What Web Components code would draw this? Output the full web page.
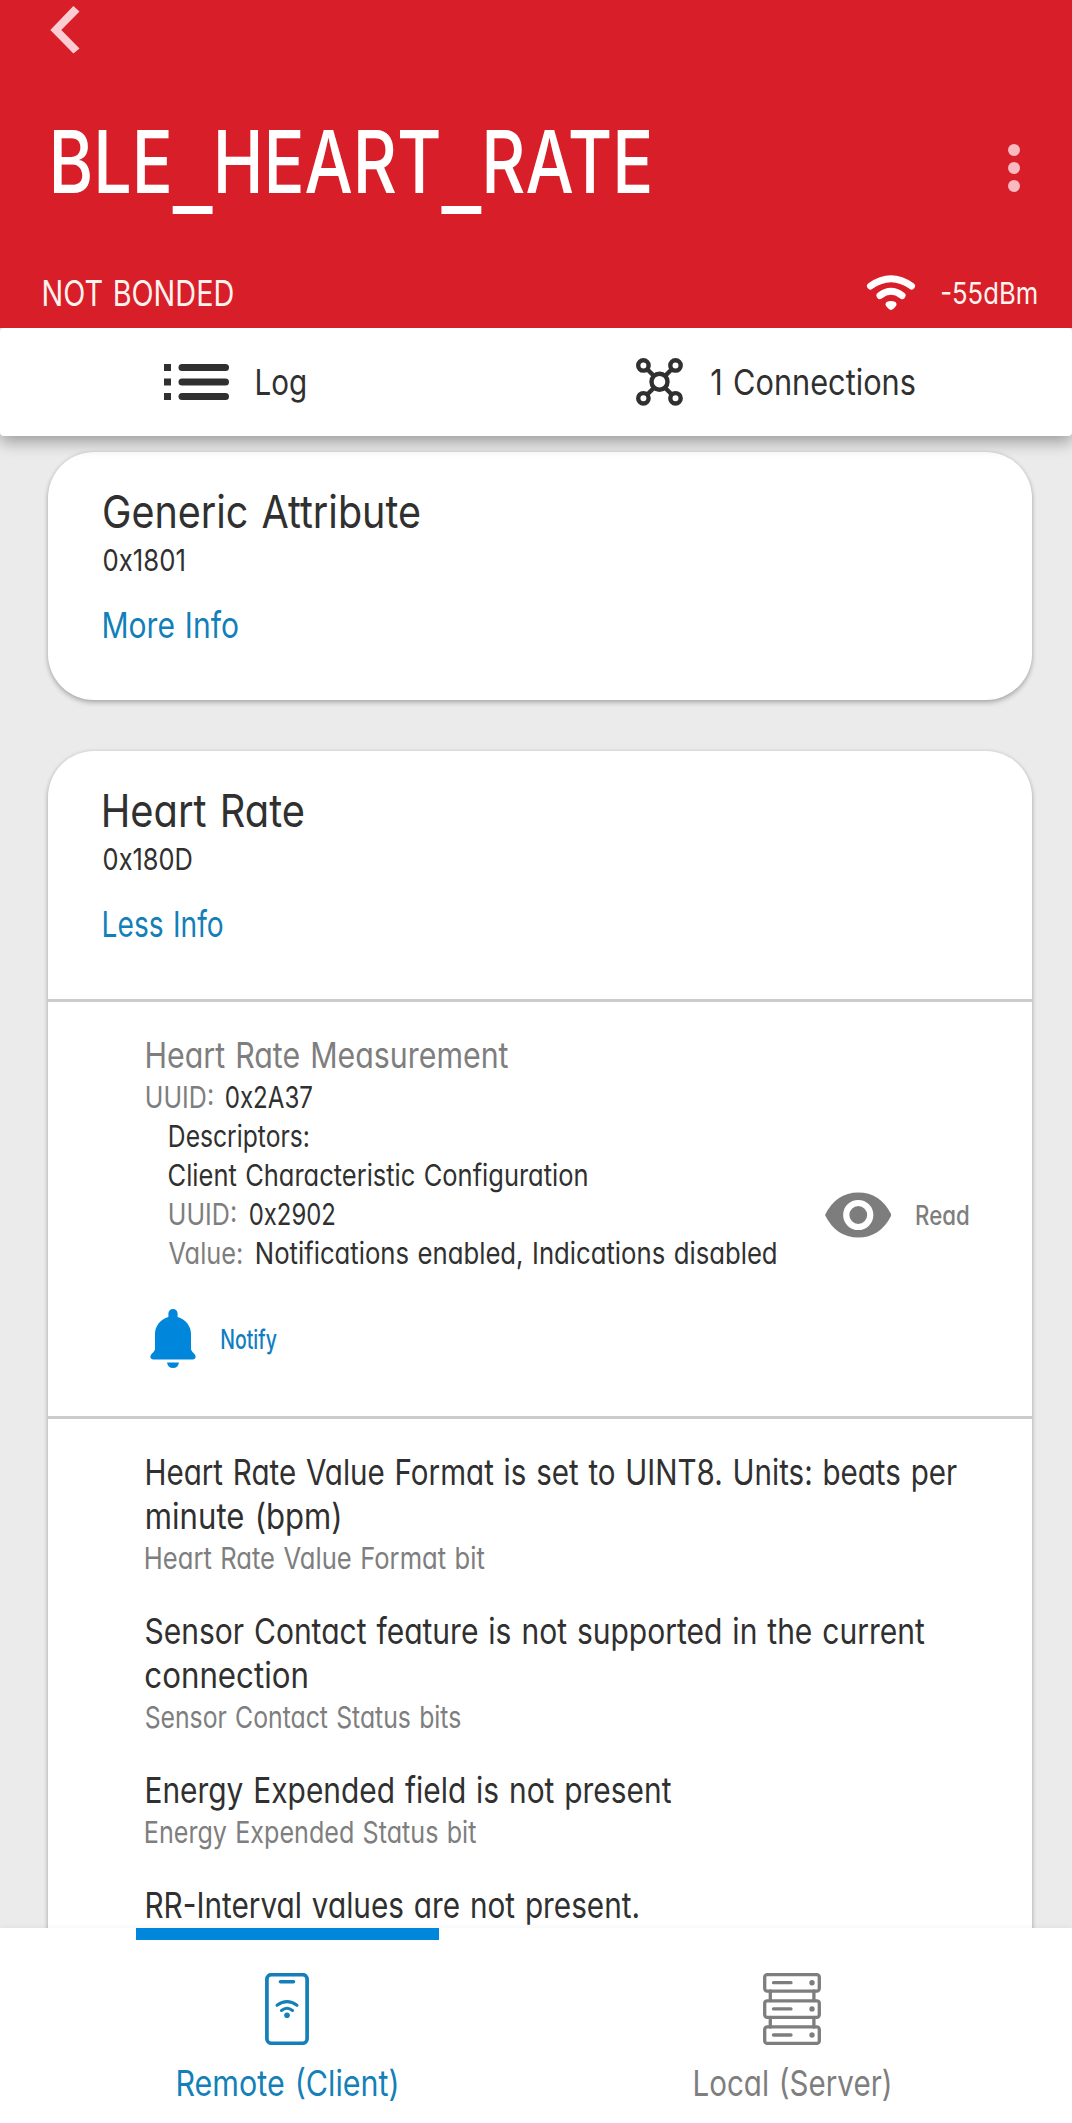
<!DOCTYPE html>
<html lang="en">
<head>
<meta charset="utf-8">
<title>BLE_HEART_RATE</title>
<style>
html,body{margin:0;padding:0}
body{width:1072px;height:2123px;overflow:hidden;background:#ebebeb;font-family:Inter,"Liberation Sans",sans-serif;color:#303030}
</style>
</head>
<body>
<device-screen></device-screen>
<script>
const define = (name, html, after) => customElements.define(name, class extends HTMLElement {
  constructor() {
    super();
    this.attachShadow({ mode: 'open' }).innerHTML = html;
  }
  connectedCallback() { if (after) after.call(this, this.shadowRoot); }
});

/* Single line of text condensed horizontally so that its ink spans exactly `w` pixels. */
const ctx = document.createElement('canvas').getContext('2d');
customElements.define('fit-text', class extends HTMLElement {
  connectedCallback() {
    if (this.shadowRoot) return;
    const w = +this.getAttribute('w'), size = +this.getAttribute('size') || 35.5;
    const lh = +this.getAttribute('lh') || 44, wt = this.getAttribute('weight') || 390;
    const dy = this.hasAttribute('dy') ? +this.getAttribute('dy') : (lh === 44 ? 1 : 0);
    this.attachShadow({ mode: 'open' }).innerHTML = `<style>
      :host{display:block;flex:none;width:${w}px;height:${lh}px;font-family:Inter,"Liberation Sans",sans-serif}
      span{display:inline-block;white-space:pre;transform-origin:0 50%;font-size:${size}px;line-height:${lh}px;
        font-weight:${wt};word-spacing:.05em;font-feature-settings:"cv11"}
      i{display:inline-block;font-style:normal;margin:0 .06em;transform:translateY(.148em) scaleX(1.26)}
      </style><span></span>`;
    const text = this.getAttribute('text');
    const s = this.shadowRoot.querySelector('span');
    s.innerHTML = text.replace(/_/g, '<i>_</i>');
    ctx.font = `${wt} ${size * 10}px Inter, "Liberation Sans", sans-serif`;
    const m = ctx.measureText(text);
    const lsb = -m.actualBoundingBoxLeft / 10, rsb = (m.width - m.actualBoundingBoxRight) / 10;
    const k = (w - 1.2) / (s.getBoundingClientRect().width - lsb - rsb);
    s.style.transform = `translate(${.8 - lsb * k}px,${dy}px) scaleX(${k})`;
  }
});

define('app-header', `<style>
  :host{display:flex;flex-direction:column;box-sizing:border-box;flex:none;height:328px;background:#d81e28;color:#fff}
  svg{display:block;flex:none}
  .back{height:60px;padding-left:50px}
  .row{display:flex;align-items:center;justify-content:space-between}
  .title{height:120px;margin-top:41.5px;padding:0 52px 0 52.5px}
  .dots{margin-top:13px}
  .status{height:44px;margin-top:49.5px;padding:0 35px 0 43.4px;color:#fff3f0}
  .signal{display:flex;align-items:center;gap:25px}
  </style>
  <div class="back"><svg width="30" height="60" viewBox="0 0 30 60"><path d="M23.4 6 29.5 11.6 11.3 30 29.5 48.4 23.4 53.5.3 30z" fill="#fbcdd2"/></svg></div>
  <div class="row title"><fit-text text="BLE_HEART_RATE" w="597" size="86.5" lh="120" weight="450"></fit-text>
    <svg class="dots" width="12" height="48" viewBox="0 0 12 48"><g fill="#f9b9c1"><circle cx="6" cy="6" r="6"/><circle cx="6" cy="24" r="6"/><circle cx="6" cy="42" r="6"/></g></svg></div>
  <div class="row status"><fit-text text="NOT BONDED" w="190.3" size="35" dy="0" weight="410"></fit-text>
    <div class="signal"><svg width="50" height="36" viewBox="0 0 50 36"><g fill="none" stroke="#fff" stroke-width="7" stroke-linecap="round"><path d="M4.5 11Q25-3.5 45.5 11"/><path d="M14 20.5Q25 12 36 20.5"/></g><path d="M20.5 27Q25 25 29.5 27 31.5 28.8 30 31L27.5 33.8Q25 36 22.5 33.8L20 31Q18.500 28.800 20.500 27z" fill="#fff"/></svg>
    <fit-text text="-55dBm" w="96" size="30" dy="0" weight="410"></fit-text></div></div>`);

define('quick-bar', `<style>
  :host{display:grid;grid-template-columns:1fr 1fr;flex:none;height:108px;background:#fff;position:relative;z-index:1;border-radius:4px;
    box-shadow:0 6px 16px rgba(0,0,0,.34);clip-path:inset(0 0 -30px 0)}
  div{display:flex;align-items:center}
  svg{display:block;flex:none}
  .log{padding-left:164px;gap:26.5px}
  .con{padding-left:100px;gap:27.500px}
  </style>
  <div class="log"><svg width="65" height="36" viewBox="0 0 65 36" fill="#303030"><path d="M0 0h7v7H0zM0 14.500h7v7H0zM0 29h7v7H0z"/><rect x="14.500" width="50.500" height="7" rx="3.500"/><rect x="14.500" y="14.500" width="50.500" height="7" rx="3.500"/><rect x="14.500" y="29" width="50.500" height="7" rx="3.500"/></svg>
    <fit-text text="Log" w="49.6"></fit-text></div>
  <div class="con"><svg width="47" height="48" viewBox="0 0 47 48" fill="none" stroke="#303030" stroke-width="4.400"><circle cx="23.500" cy="23.700" r="8"/><circle cx="7.400" cy="7.400" r="5.200"/><circle cx="39.500" cy="7.400" r="5.200"/><circle cx="7.400" cy="40.300" r="5.200"/><circle cx="39.500" cy="40.300" r="5.200"/><path d="M11 11l7 7M36 11l-7 7M11 36.700l7-7M36 36.700l-7-7"/></svg>
    <fit-text text="1 Connections" w="204"></fit-text></div>`);

define('service-card', `<style>
  :host{display:block;flex:none;margin:0 40px 0 48px;background:#fff;border-radius:46px;box-shadow:0 3px 5px rgba(0,0,0,.22),0 0 4px rgba(0,0,0,.12)}
  .head{box-sizing:border-box;height:248px;padding:34.5px 0 0 55.3px}
  .id{margin-top:4px}
  .link{margin-top:23px;color:#127fb9}
  </style><div class="head"></div><slot></slot>`, function (root) {
  const a = n => this.getAttribute(n);
  root.querySelector('.head').innerHTML =
    `<fit-text text="${a('name')}" w="${a('name-w')}" size="45.500" lh="50"></fit-text>
     <fit-text class="id" text="${a('code')}" w="${a('code-w')}" size="30" lh="40" dy="-.8"></fit-text>
     <fit-text class="link" text="${a('link')}" w="${a('link-w')}" size="35.500" dy=".2"></fit-text>`;
});

define('characteristic-panel', `<style>
  :host{display:flex;box-sizing:border-box;height:417px;border-top:3px solid #ccc;padding:31px 63.500px 0 97.500px;justify-content:space-between}
  .grey{color:#7e7e7e}
  .line{display:flex}
  .desc{padding-left:22.900px}
  svg{display:block;flex:none}
  .notify{display:flex;align-items:center;height:60px;margin-top:36px;padding-left:4.500px;gap:25px;color:#0f7dc2}
  .read{display:flex;align-items:center;height:46px;margin-top:158.500px;gap:25px}
  </style>
  <div>
    <fit-text class="grey" style="margin-left:.5px" text="Heart Rate Measurement" w="362.500"></fit-text>
    <div class="line"><fit-text class="grey" text="UUID:" w="66.800" size="30" lh="39.500" dy="1"></fit-text><fit-text style="margin-left:13px" text="0x2A37" w="87.500" size="30" lh="39.500" dy="1"></fit-text></div>
    <div class="desc">
      <fit-text style="margin-left:.8px" text="Descriptors:" w="139.500" size="30" lh="39"></fit-text>
      <fit-text text="Client Characteristic Configuration" w="419" size="30" lh="39"></fit-text>
      <div class="line"><fit-text class="grey" style="margin-left:.4px" text="UUID:" w="66.800" size="30" lh="39"></fit-text><fit-text style="margin-left:13.500px" text="0x2902" w="85.800" size="30" lh="39"></fit-text></div>
      <div class="line"><fit-text class="grey" text="Value:" w="74" size="30" lh="39"></fit-text><fit-text style="margin-left:13.800px" text="Notifications enabled, Indications disabled" w="520.300" size="30" lh="39"></fit-text></div>
    </div>
    <div class="notify"><svg width="46" height="60" viewBox="0 0 46 60" fill="#0086da"><path d="M23 0a4.600 4.600 0 0 1 4.600 4.600V8C35.500 10 41 17 41 25V40.500Q42 43 44.500 45 46.500 47.500 45 49.500 44 50.500 42.500 50.500H3.500Q2 50.500 1 49.500-.5 47.500 1.500 45 4 43 5 40.500V25C5 17 10.500 10 18.400 8V4.600A4.600 4.600 0 0 1 23 0z"/><path d="M17 53.500H29Q28 59 23 59T17 53.500z"/></svg>
      <fit-text text="Notify" w="56" size="26.500" weight="500" dy="0"></fit-text></div>
  </div>
  <div class="read grey"><svg width="66.500" height="46" viewBox="0 0 66.500 46"><path d="M0 23Q11 .5 33.250.5T66.500 23Q55.500 45.500 33.250 45.500T0 23z" fill="#7d7d7d"/><circle cx="33.250" cy="23" r="12" fill="none" stroke="#fff" stroke-width="6.200"/></svg>
    <fit-text text="Read" w="52.500" size="26.500" weight="500" dy="0"></fit-text></div>`);

define('value-list', `<style>
  :host{display:flex;flex-direction:column;gap:31px;border-top:3px solid #ccc;padding:31.300px 0 0 97.300px;height:600px}
  .grey{color:#7e7e7e}
  .h{margin-left:.6px}
  </style>
  <div><fit-text class="h" text="Heart Rate Value Format is set to UINT8. Units: beats per" w="811"></fit-text>
    <fit-text class="h" text="minute (bpm)" w="194"></fit-text>
    <fit-text class="grey" text="Heart Rate Value Format bit" w="339.800" size="30" lh="40"></fit-text></div>
  <div><fit-text text="Sensor Contact feature is not supported in the current" w="779.800"></fit-text>
    <fit-text text="connection" w="162"></fit-text>
    <fit-text class="grey" text="Sensor Contact Status bits" w="315.600" size="30" lh="40"></fit-text></div>
  <div><fit-text class="h" text="Energy Expended field is not present" w="525.400"></fit-text>
    <fit-text class="grey" text="Energy Expended Status bit" w="331.400" size="30" lh="40"></fit-text></div>
  <div><fit-text class="h" text="RR-Interval values are not present." w="492.400"></fit-text></div>`);

define('bottom-nav', `<style>
  :host{display:flex;flex:none;box-sizing:border-box;height:195px;background:#fff;position:relative;z-index:1;box-shadow:0 0 7px rgba(0,0,0,.06);padding-left:136px;gap:202px}
  .tab{width:303px;display:flex;flex-direction:column;align-items:center}
  .tab::before{content:"";width:100%;height:12px;background:var(--mark,transparent)}
  svg{display:block;flex:none;margin:33px 1.500px 16px 0}
  fit-text{margin-right:1.400px}
  .on{--mark:#0086da;color:#147fb8}
  .off{color:#7e7e7e}
  </style>
  <div class="tab on"><svg width="44" height="72" viewBox="0 0 44 72" fill="none" stroke="currentColor" stroke-linecap="round"><rect x="1.900" y="1.700" width="40.200" height="68.600" rx="4.500" stroke-width="3.700"/><path d="M15.500 8.800h13" stroke-width="3.600"/><path d="M12 32.300Q22 25 32 32.300M16.500 37.500Q22 33 27.500 37.500" stroke-width="3"/><circle cx="22" cy="42.300" r="2.800" fill="currentColor" stroke="none"/></svg>
    <fit-text text="Remote (Client)" w="220"></fit-text></div>
  <div class="tab off"><svg width="58" height="72" viewBox="0 0 58 72" fill="none" stroke="currentColor" stroke-width="3.300" stroke-linecap="round"><rect x="1.700" y="1.600" width="54.600" height="16.500" rx="2.500"/><rect x="1.700" y="27.800" width="54.600" height="16.500" rx="2.500"/><rect x="1.700" y="53.900" width="54.600" height="16.500" rx="2.500"/><path d="M7.300 18v9.500M50.900 18v9.500M7.300 44.500v9.500M50.900 44.500v9.500M10.500 9.700H28M10.500 35.900H28M10.500 62H28"/><g fill="currentColor" stroke="none"><circle cx="49" cy="9.700" r="2.700"/><circle cx="49" cy="35.900" r="2.700"/><circle cx="49" cy="62" r="2.700"/></g></svg>
    <fit-text text="Local (Server)" w="196"></fit-text></div>`);

define('device-screen', `<style>
  :host{display:flex;flex-direction:column;width:1072px;height:2123px;overflow:hidden;background:#ebebeb}
  main{flex:1;min-height:0;overflow:hidden;display:flex;flex-direction:column;gap:51px;padding-top:16px}
  </style>
  <app-header></app-header><quick-bar></quick-bar>
  <main>
    <service-card name="Generic Attribute" name-w="317" code="0x1801" code-w="81.300" link="More Info" link-w="135.200"></service-card>
    <service-card name="Heart Rate" name-w="201" code="0x180D" code-w="89" link="Less Info" link-w="120">
      <characteristic-panel></characteristic-panel>
      <value-list></value-list>
    </service-card>
  </main>
  <bottom-nav></bottom-nav>`);
</script>
</body>
</html>
